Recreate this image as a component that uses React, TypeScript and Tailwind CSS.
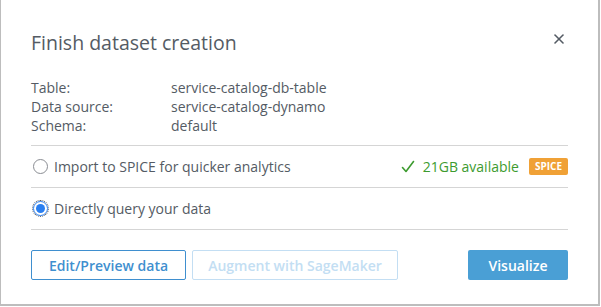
import { X } from "lucide-react";

const details = [
  { label: "Table:", value: "service-catalog-db-table" },
  { label: "Data source:", value: "service-catalog-dynamo" },
  { label: "Schema:", value: "default" },
];

export default function App() {
  return (
    <div
      className="h-[307px] w-[601px] overflow-hidden bg-white"
      style={{ fontFamily: '"Open Sans", "Liberation Sans", sans-serif' }}
    >
      <div className="flex h-[306px] w-[600px] flex-col border-b-2 border-l border-r-2 border-[#bdbdbd] px-[30px] pt-[28px] text-[#545b64]">
        <div className="flex items-start justify-between">
          <h2 className="text-[19.5px] leading-[30px] text-[#545b64]">Finish dataset creation</h2>
          <button type="button" className="mr-[-3px] mt-[-1px] p-1 text-[#545b64]" aria-label="Close">
            <X size={16} strokeWidth={2.4} />
          </button>
        </div>

        <div className="mt-[20px] flex flex-col">
          {details.map((d) => (
            <div key={d.label} className="flex text-[14px] leading-[19px]">
              <span className="w-[140px]">{d.label}</span>
              <span>{d.value}</span>
            </div>
          ))}
        </div>

        <div className="mt-[10px] border-t border-[#d5d5d5]" />

        <label className="flex h-[41px] items-center text-[14px]">
          <span className="ml-[2px] mr-[6px] h-[15px] w-[15px] rounded-full border-[1.5px] border-[#8a8d93]" />
          <span className="flex-1">Import to SPICE for quicker analytics</span>
          <span className="flex items-center gap-[8px] text-[#3d9b2f]">
            <svg width="14" height="14" viewBox="0 0 14 14" fill="none">
              <path d="M1.5 7.5 L5 11.5 L12.5 1.5" stroke="#3d9b2f" strokeWidth="1.6" strokeLinecap="round" strokeLinejoin="round" />
            </svg>
            21GB available
          </span>
          <span className="ml-[10px] rounded-[2px] bg-[#f0a136] px-[6px] text-[10px] font-bold leading-[17px] text-white">
            SPICE
          </span>
        </label>

        <div className="border-t border-[#d5d5d5]" />

        <label className="flex h-[41px] items-center text-[14px]">
          <span className="ml-[2px] mr-[6px] flex h-[15px] w-[15px] items-center justify-center rounded-full border-[1.5px] border-[#2a7ff0] outline outline-1 outline-dotted outline-offset-0 outline-[#555]">
            <span className="h-[9px] w-[9px] rounded-full bg-[#2a7ff0]" />
          </span>
          <span>Directly query your data</span>
        </label>

        <div className="border-t border-[#d5d5d5]" />

        <div className="mt-[20px] flex items-center">
          <button
            type="button"
            className="h-[30px] w-[155px] rounded-[2px] border border-[#3f8fcf] text-[14px] font-semibold text-[#3f8fcf]"
          >
            Edit/Preview data
          </button>
          <button
            type="button"
            disabled
            className="ml-[6px] h-[30px] w-[206px] rounded-[2px] border border-[#c3def3] text-[14px] font-semibold text-[#c3def3]"
          >
            Augment with SageMaker
          </button>
          <button
            type="button"
            className="ml-auto h-[30px] w-[100px] rounded-[2px] bg-[#4a9fd5] text-[14px] font-semibold text-white"
          >
            Visualize
          </button>
        </div>
      </div>
    </div>
  );
}
